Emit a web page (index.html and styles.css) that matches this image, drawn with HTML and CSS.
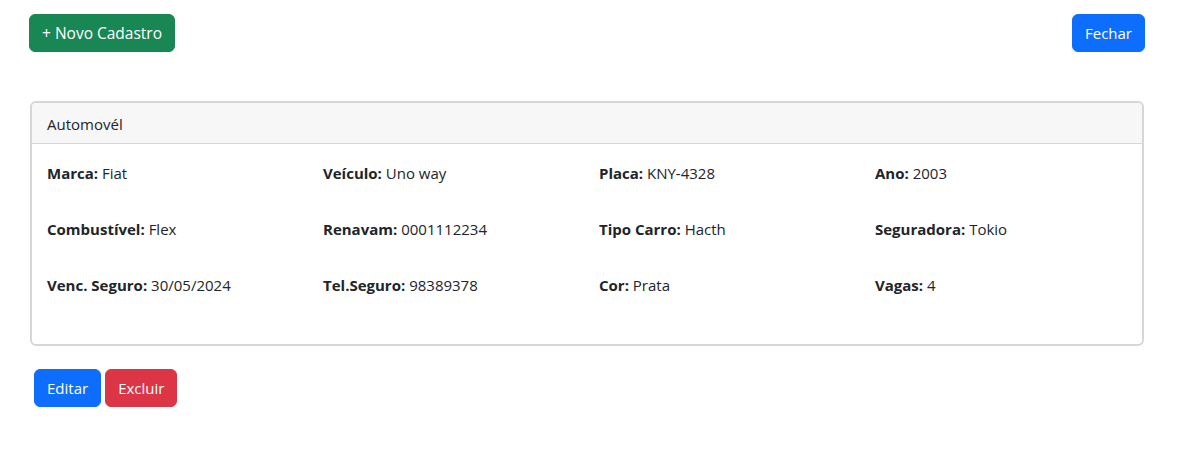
FILE: index.html
```html
<!DOCTYPE html>
<html lang="pt-BR">
<head>
<meta charset="utf-8">
<title>Automóvel</title>
<link rel="stylesheet" href="styles.css">
</head>
<body>
<div class="page">
  <div class="toolbar">
    <button class="btn btn-success btn-new">+ Novo Cadastro</button>
    <button class="btn btn-primary">Fechar</button>
  </div>

  <div class="card">
    <div class="card-header">Automovél</div>
    <div class="card-body">
      <div class="grid">
        <p><b>Marca:</b> Fiat</p>
        <p><b>Veículo:</b> Uno way</p>
        <p><b>Placa:</b> KNY-4328</p>
        <p><b>Ano:</b> 2003</p>
        <p><b>Combustível:</b> Flex</p>
        <p><b>Renavam:</b> 0001112234</p>
        <p><b>Tipo Carro:</b> Hacth</p>
        <p><b>Seguradora:</b> Tokio</p>
        <p><b>Venc. Seguro:</b> 30/05/2024</p>
        <p><b>Tel.Seguro:</b> 98389378</p>
        <p><b>Cor:</b> Prata</p>
        <p><b>Vagas:</b> 4</p>
      </div>
    </div>
  </div>

  <div class="actions">
    <button class="btn btn-primary">Editar</button>
    <button class="btn btn-danger">Excluir</button>
  </div>
</div>
</body>
</html>
```

FILE: styles.css
```css
* { box-sizing: border-box; }

body {
  margin: 0;
  background: #fff;
  color: #212529;
  font-family: "Open Sans", "Noto Sans", "Liberation Sans", sans-serif;
  font-size: 15px;
  line-height: 24px;
}

.page {
  padding: 14px 38px 0 29px;
}

.toolbar {
  display: flex;
  justify-content: space-between;
  align-items: center;
}

.btn {
  font-family: inherit;
  font-size: 15px;
  line-height: 24px;
  height: 38px;
  padding: 6px 12px;
  border: 1px solid transparent;
  border-radius: 6px;
  color: #fff;
  cursor: pointer;
}

.btn-new { padding: 6px 12px; font-size: 15.5px; }

.btn-success { background: #198754; border-color: #198754; }
.btn-primary { background: #0d6efd; border-color: #0d6efd; }
.btn-danger  { background: #dc3545; border-color: #dc3545; }

.card {
  margin-top: 49px;
  margin-left: 1px;
  margin-right: 1px;
  border: 2px solid #d6d6d6;
  border-radius: 6px;
  overflow: hidden;
}

.card-header {
  background: #f7f7f7;
  border-bottom: 1px solid #d6d6d6;
  height: 41px;
  padding: 9px 15px 7px;
}

.card-body {
  padding: 17px 15px 15px;
}

.grid {
  display: grid;
  grid-template-columns: repeat(4, 276px);
}

.grid p {
  margin: 0 0 32px;
}

.grid b { font-weight: 700; }

.actions {
  margin-top: 23px;
  padding-left: 5px;
  display: flex;
  gap: 4px;
}
```
